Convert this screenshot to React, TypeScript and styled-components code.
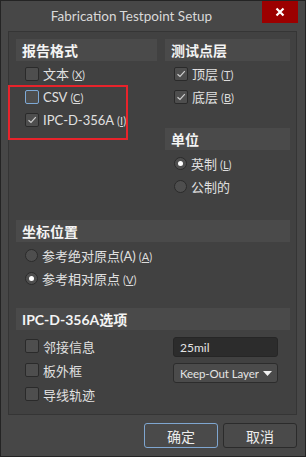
import React from 'react';
import styled, { createGlobalStyle } from 'styled-components';

const Global = createGlobalStyle`
  html, body {
    margin: 0;
    padding: 0;
    background: #474747;
  }
  body {
    font-family: Lato, 'Noto Sans CJK SC', sans-serif;
  }
`;

const Window = styled.div`
  width: 306px;
  height: 457px;
  box-sizing: border-box;
  border: 1px solid #242424;
  background: #474747;
  display: flex;
  flex-direction: column;
  color: #e2e2e2;
`;

const TitleBar = styled.div`
  height: 30px;
  display: flex;
  align-items: flex-start;
  padding-right: 7px;
`;

const Title = styled.div`
  flex: 1;
  height: 30px;
  line-height: 30px;
  text-align: center;
  font-size: 13.5px;
  color: #d9d9d9;
`;

const CloseButton = styled.div`
  width: 36px;
  height: 22px;
  background: #9c0000;
  display: flex;
  align-items: center;
  justify-content: center;
`;

const Panel = styled.div`
  position: relative;
  height: 384px;
  box-sizing: border-box;
  margin: 0 8px 0 7px;
  border: 1px solid #353535;
  background: #414141;
  padding: 7px 6px 0 7px;
`;

const TopGrid = styled.div`
  display: grid;
  grid-template-columns: 141px 125px;
  column-gap: 8px;
  align-items: start;
`;

const Column = styled.div`
  display: flex;
  flex-direction: column;
`;

const Band = styled.div<{ $top?: number }>`
  height: 22px;
  margin-top: ${(p) => p.$top ?? 0}px;
  background: #4a4a4a;
  padding-left: 6px;
  display: flex;
  align-items: center;
  font-size: 14px;
  font-weight: 700;
  color: #f4f4f4;
`;

const List = styled.div<{ $top: number }>`
  display: flex;
  flex-direction: column;
  margin-top: ${(p) => p.$top}px;
`;

const Row = styled.div<{ $h?: number }>`
  height: ${(p) => p.$h ?? 23}px;
  display: flex;
  align-items: center;
  padding-left: 9px;
  gap: 4px;
  font-size: 13px;
  color: #e0e0e0;
  white-space: nowrap;
`;

const Box = styled.span<{ $focus?: boolean }>`
  width: 14px;
  height: 14px;
  box-sizing: border-box;
  border: 1px solid ${(p) => (p.$focus ? '#7ea9d6' : '#2a2a2a')};
  border-radius: 2px;
  background: #4e4e4e;
  display: flex;
  align-items: center;
  justify-content: center;
  flex-shrink: 0;
`;

const Radio = styled.span<{ $on?: boolean }>`
  width: 13px;
  height: 13px;
  box-sizing: border-box;
  border: 1px solid #2b2b2b;
  border-radius: 50%;
  background: #4e4e4e;
  display: flex;
  align-items: center;
  justify-content: center;
  flex-shrink: 0;
  &::after {
    content: '';
    display: ${(p) => (p.$on ? 'block' : 'none')};
    width: 5px;
    height: 5px;
    border-radius: 50%;
    background: #ffffff;
  }
`;

const Accel = styled.span`
  font-size: 11px;
  margin-left: 3px;
  color: #dcdcdc;
  u {
    text-decoration: underline;
    text-underline-offset: 1px;
  }
`;

const Marker = styled.div`
  position: absolute;
  left: -1px;
  top: 53px;
  width: 120px;
  height: 55px;
  box-sizing: border-box;
  border: 2px solid #e8232b;
  pointer-events: none;
`;

const OptionsGrid = styled.div`
  display: grid;
  grid-template-columns: 157px 105px;
  margin-top: 4px;
`;

const Fields = styled.div`
  display: flex;
  flex-direction: column;
  gap: 6px;
  margin-top: 3px;
`;

const Input = styled.div`
  height: 20px;
  box-sizing: border-box;
  border: 1px solid #262626;
  border-radius: 3px;
  background: #2c2c2c;
  padding-left: 6px;
  display: flex;
  align-items: center;
  font-size: 12px;
  color: #e4e4e4;
`;

const Select = styled.div`
  height: 20px;
  box-sizing: border-box;
  border: 1px solid #2c2c2c;
  border-radius: 3px;
  background: #4b4b4b;
  padding: 0 5px 0 6px;
  display: flex;
  align-items: center;
  justify-content: space-between;
  font-size: 11.5px;
  letter-spacing: -0.1px;
  color: #e4e4e4;
  white-space: nowrap;
  span {
    overflow: hidden;
  }
  svg {
    flex-shrink: 0;
  }
`;

const ButtonRow = styled.div`
  display: flex;
  justify-content: flex-end;
  gap: 5px;
  padding: 8px 8px 0 0;
`;

const Button = styled.div<{ $primary?: boolean }>`
  width: 74px;
  height: 25px;
  box-sizing: border-box;
  border: 1px solid ${(p) => (p.$primary ? '#7fa6d0' : '#2b2b2b')};
  border-radius: 3px;
  background: #4a4a4a;
  display: flex;
  align-items: center;
  justify-content: center;
  font-size: 14px;
  color: #ececec;
`;

const Check = () => (
  <svg width="10" height="8" viewBox="0 0 10 8">
    <path d="M1.5 4.2 L4 6.5 L8.8 1.2" fill="none" stroke="#cfcfcf" strokeWidth="1.2" />
  </svg>
);

const CheckRow: React.FC<{ checked?: boolean; focus?: boolean; h?: number; children: React.ReactNode }> = ({
  checked,
  focus,
  h,
  children,
}) => (
  <Row $h={h}>
    <Box $focus={focus}>{checked && <Check />}</Box>
    <span>{children}</span>
  </Row>
);

const RadioRow: React.FC<{ on?: boolean; children: React.ReactNode }> = ({ on, children }) => (
  <Row>
    <Radio $on={on} />
    <span>{children}</span>
  </Row>
);

const Key: React.FC<{ k: string }> = ({ k }) => (
  <Accel>
    (<u>{k}</u>)
  </Accel>
);

const App: React.FC = () => {
  return (
    <>
      <Global />
      <Window>
        <TitleBar>
          <Title>Fabrication Testpoint Setup</Title>
          <CloseButton>
            <svg width="10" height="10" viewBox="0 0 10 10">
              <path d="M1.5 1.5 L8.5 8.5 M8.5 1.5 L1.5 8.5" stroke="#ffffff" strokeWidth="2.2" />
            </svg>
          </CloseButton>
        </TitleBar>

        <Panel>
          <TopGrid>
            <Column>
              <Band>报告格式</Band>
              <List $top={1}>
                <CheckRow>
                  文本<Key k="X" />
                </CheckRow>
                <CheckRow focus>
                  CSV<Key k="C" />
                </CheckRow>
                <CheckRow checked>
                  IPC-D-356A<Key k="I" />
                </CheckRow>
              </List>
            </Column>
            <Column>
              <Band>测试点层</Band>
              <List $top={1}>
                <CheckRow checked>
                  顶层<Key k="T" />
                </CheckRow>
                <CheckRow checked>
                  底层<Key k="B" />
                </CheckRow>
              </List>
              <Band $top={20}>单位</Band>
              <List $top={2}>
                <RadioRow on>
                  英制<Key k="L" />
                </RadioRow>
                <RadioRow>公制的</RadioRow>
              </List>
            </Column>
          </TopGrid>

          <Band $top={22}>坐标位置</Band>
          <List $top={2}>
            <RadioRow>
              参考绝对原点(A)<Key k="A" />
            </RadioRow>
            <RadioRow on>
              参考相对原点<Key k="V" />
            </RadioRow>
          </List>

          <Band $top={18}>IPC-D-356A选项</Band>
          <OptionsGrid>
            <Column>
              <CheckRow h={24}>邻接信息</CheckRow>
              <CheckRow h={24}>板外框</CheckRow>
              <CheckRow h={24}>导线轨迹</CheckRow>
            </Column>
            <Fields>
              <Input>25mil</Input>
              <Select>
                <span>Keep-Out Layer</span>
                <svg width="9" height="5" viewBox="0 0 9 5">
                  <path d="M0 0 H9 L4.5 5 Z" fill="#f2f2f2" />
                </svg>
              </Select>
            </Fields>
          </OptionsGrid>

          <Marker />
        </Panel>

        <ButtonRow>
          <Button $primary>确定</Button>
          <Button>取消</Button>
        </ButtonRow>
      </Window>
    </>
  );
};

export default App;
